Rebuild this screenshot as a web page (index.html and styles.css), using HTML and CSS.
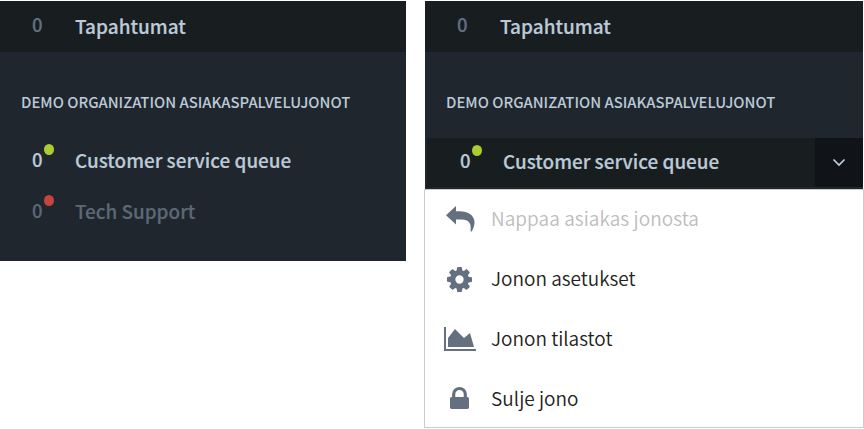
FILE: index.html
```
<!DOCTYPE html>
<html lang="fi">
<head>
<meta charset="utf-8">
<title>Asiakaspalvelujonot</title>
<link rel="stylesheet" href="styles.css">
</head>
<body>
<main class="page">
  <section class="column">
    <nav class="panel panel-closed">
      <div class="row events"><span class="count">0</span><span class="name">Tapahtumat</span></div>
      <h2 class="heading">DEMO ORGANIZATION ASIAKASPALVELUJONOT</h2>
      <div class="row queue"><span class="count">0<i class="dot open"></i></span><span class="name">Customer service queue</span></div>
      <div class="row queue muted"><span class="count">0<i class="dot shut"></i></span><span class="name">Tech Support</span></div>
    </nav>
  </section>
  <section class="column column-menu">
    <nav class="panel panel-open">
      <div class="row events"><span class="count">0</span><span class="name">Tapahtumat</span></div>
      <h2 class="heading">DEMO ORGANIZATION ASIAKASPALVELUJONOT</h2>
      <div class="row queue selected">
        <span class="count">0<i class="dot open"></i></span><span class="name">Customer service queue</span>
        <span class="toggle"><svg width="14" height="9" viewBox="0 0 14 9"><path d="M1.500 1.500 7 7l5.500-5.500" fill="none" stroke="#c3cedb" stroke-width="1.700"/></svg></span>
      </div>
    </nav>
    <ul class="menu">
      <li class="item disabled"><span class="icon"><svg width="29" height="26" viewBox="0 0 29 26"><path d="M0 9.200 10 0v5.200c7.500-.2 12.500.8 15.500 4 4.200 4.500 3.800 9.800.1 16.300h-1c.3-5.700.1-8.300-2.800-10.500-2.400-1.500-6-1.600-11.800-1.500v5z"/></svg></span><span class="label">Nappaa asiakas jonosta</span></li>
      <li class="item"><span class="icon"><svg class="gear" width="25" height="25" viewBox="128 128 1536 1536"><path d="M1152 896q0-106-75-181t-181-75-181 75-75 181 75 181 181 75 181-75 75-181zm512-109v222q0 12-8 23t-20 13l-185 28q-19 54-39 91 35 50 107 138 10 12 10 25t-9 23q-27 37-99 108t-94 71q-12 0-26-9l-138-108q-44 23-91 38-16 136-29 186-7 28-36 28h-222q-14 0-24.500-8.500t-11.500-21.500l-28-184q-49-16-90-37l-141 107q-10 9-25 9-14 0-25-11-126-114-165-168-7-10-7-23 0-12 8-23 15-21 51-66.500t54-70.500q-27-50-41-99l-183-27q-13-2-21-12.500t-8-23.500v-222q0-12 8-23t19-13l186-28q14-46 39-92-40-57-107-138-10-12-10-24 0-10 9-23 26-36 98.500-107.500t94.500-71.500q13 0 26 10l138 107q44-23 91-38 16-136 29-186 7-28 36-28h222q14 0 24.500 8.500t11.500 21.500l28 184q49 16 90 37l142-107q9-9 24-9 13 0 25 10 129 119 165 170 7 8 7 22 0 12-8 23-15 21-51 66.500t-54 70.500q26 50 41 98l183 28q13 2 21 12.500t8 23.500z"/></svg></span><span class="label">Jonon asetukset</span></li>
      <li class="item"><span class="icon"><svg width="32" height="24" viewBox="0 128 2048 1536"><path d="M2048 1536v128h-2048v-1536h128v1408h1920zm-384-1024l256 896h-1664v-576l448-576 576 576z"/></svg></span><span class="label">Jonon tilastot</span></li>
      <li class="item"><span class="icon"><svg class="lock" width="19" height="22" viewBox="320 128 1152 1408" preserveAspectRatio="none"><path d="M640 768h512v-192q0-106-75-181t-181-75-181 75-75 181v192zm832 96v576q0 40-28 68t-68 28h-960q-40 0-68-28t-28-68v-576q0-40 28-68t68-28h32v-192q0-184 132-316t316-132 316 132 132 316v192h32q40 0 68 28t28 68z"/></svg></span><span class="label">Sulje jono</span></li>
    </ul>
  </section>
</main>
</body>
</html>
```
FILE: styles.css
```
* { box-sizing: border-box; }
body {
  margin: 0;
  background: #fff;
  font-family: "Noto Sans CJK SC", "Noto Sans", sans-serif;
  overflow: hidden;
}
.page { display: flex; gap: 18px; height: 429px; padding-top: 1px; }
.column { width: 406px; }
.column-menu { width: 440px; }
.panel { background: #1f262d; color: #bccad8; }
.panel-closed { height: 260px; }
.panel-open { height: 188px; margin: 0 1px; }
.row { display: flex; align-items: center; height: 51px; font-size: 18.9px; line-height: 26px; font-weight: 500; }
.name { padding-bottom: 4px; -webkit-text-stroke: 0.2px currentColor; }
.events .name { padding-bottom: 2px; font-size: 19px; }
.events { background: #181d20; }
.count { position: relative; flex: none; width: 75px; padding-left: 32px; padding-bottom: 6px; font-size: 18.500px; -webkit-text-stroke: 0.2px currentColor; }
.events .count { color: #647080; }
.dot { position: absolute; left: 44px; top: -2px; width: 10px; height: 11px; border-radius: 50%; }
.open { background: #adcb32; }
.shut { background: #c54343; }
.muted { color: #5c6877; }
.heading { margin: 0; height: 84px; padding: 39px 0 0 21px; font-size: 14.870px; line-height: 22px; font-weight: 500; }
.selected { height: 49px; margin: 2px 0 0 2px; background: #181d20; }
.selected .count { width: 76px; padding-left: 33px; }
.selected .dot { left: 45px; }
.toggle { display: flex; align-items: center; justify-content: center; width: 48px; height: 49px; margin-left: auto; background: #101317; border-radius: 2px 0 0 3px; }
.menu { list-style: none; margin: 0; padding: 0 0 0 19px; height: 239px; border: 1px solid #ccc; }
.item { display: flex; align-items: center; height: 60px; color: #222; font-size: 19px; line-height: 28px; font-weight: 350; }
.label { padding-bottom: 4px; }
.disabled { color: #bdbdbd; letter-spacing: 0.06px; }
.icon { display: flex; justify-content: center; width: 32px; margin-right: 15px; padding-bottom: 2px; }
.icon svg { display: block; fill: #64707f; }
.icon .gear { margin-right: 1px; }
.icon .lock { margin: 0 1px 2px 0; }
```
